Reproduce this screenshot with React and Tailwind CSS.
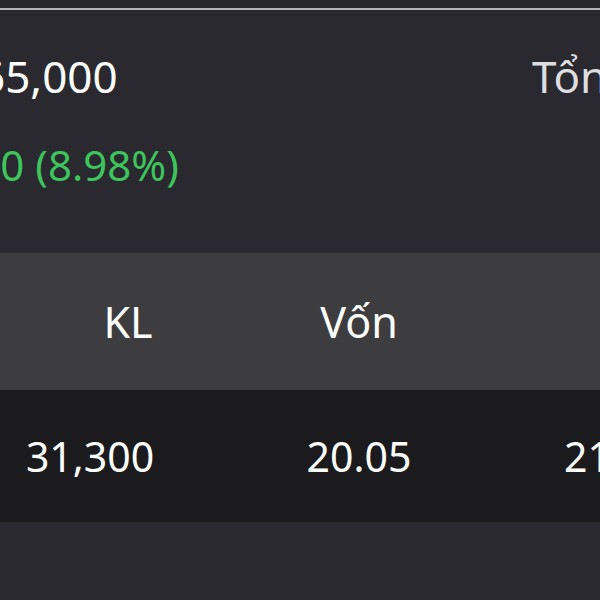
import React from 'react';

const App = () => {
    return (
        <div className="w-[600px] h-[600px] overflow-hidden bg-[#29292f] text-white" style={{ fontFamily: '"Noto Sans", "Open Sans", sans-serif' }}>
            {/* top bar edge */}
            <div className="h-[8px] bg-[#26262c]" />
            <div className="h-[2px] bg-[#b4b4b6]" />

            {/* price summary */}
            <div className="h-[243px]">
                <div className="flex pt-[44px] whitespace-nowrap">
                    <div className="ml-[-20px] w-[552px] shrink-0 text-[44px] leading-none">65,000</div>
                    <div className="shrink-0 text-[44px] leading-none text-[#dedee0]">Tổng</div>
                </div>
                <div className="mt-[46px] ml-[-107px] text-[42px] leading-none text-[#3ec45c] whitespace-nowrap">
                    +5,360 (8.98%)
                </div>
            </div>

            {/* table header */}
            <div className="h-[137px] bg-[#3d3d40] flex items-center text-[43px] leading-none whitespace-nowrap">
                <div className="w-[256px] shrink-0 text-center">KL</div>
                <div className="w-[206px] shrink-0 text-center">Vốn</div>
            </div>

            {/* table row */}
            <div className="h-[132px] bg-[#1b1b1e] flex items-center text-[41px] leading-none whitespace-nowrap">
                <div className="w-[180px] shrink-0 text-center">31,300</div>
                <div className="w-[358px] shrink-0 text-center">20.05</div>
                <div className="shrink-0 pl-[26px]">21,400</div>
            </div>
        </div>
    );
};

export default App;
